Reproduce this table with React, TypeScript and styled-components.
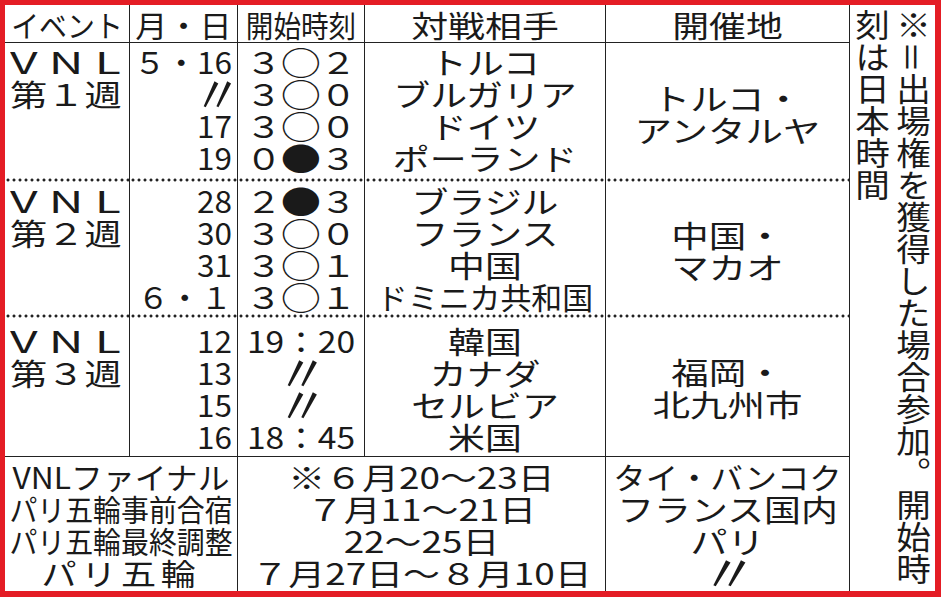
import React from 'react';
import styled, { createGlobalStyle, css } from 'styled-components';

type Align = 'left' | 'center' | 'right';
type Edge = 'solid' | 'dotted' | 'none';

interface TextLine {
  t: string;
  sx?: number;
  ls?: number;
}

interface CellData {
  lines: (string | TextLine)[];
  align: Align;
  sx: number;
  span?: number;
  middle?: boolean;
  ruled?: boolean;
}

interface Block {
  edge: Edge;
  padTop: number;
  cells: CellData[];
}

const INK = '#1a1a1a';
const RULE = '#222';

const VNL: TextLine = { t: 'VNL', sx: 1.6, ls: 7 };

const header: CellData[] = [
  { lines: ['イベント'], align: 'center', sx: 0.93 },
  { lines: ['月・日'], align: 'center', sx: 1.07 },
  { lines: ['開始時刻'], align: 'center', sx: 0.92 },
  { lines: ['対戦相手'], align: 'center', sx: 1.23 },
  { lines: ['開催地'], align: 'center', sx: 1.23, ruled: false },
];

const blocks: Block[] = [
  {
    edge: 'dotted',
    padTop: 2,
    cells: [
      { lines: [VNL, '第１週'], align: 'left', sx: 1.24 },
      { lines: ['５・16', '〃', '17', '19'], align: 'right', sx: 1.05 },
      { lines: ['３○２', '３○０', '３○０', '０●３'], align: 'center', sx: 1.2 },
      { lines: ['トルコ', 'ブルガリア', 'ドイツ', 'ポーランド'], align: 'center', sx: 1.23 },
      { lines: ['トルコ・', 'アンタルヤ'], align: 'center', sx: 1.25, middle: true, ruled: false },
    ],
  },
  {
    edge: 'dotted',
    padTop: 2,
    cells: [
      { lines: [VNL, '第２週'], align: 'left', sx: 1.24 },
      { lines: ['28', '30', '31', '６・１'], align: 'right', sx: 1.05 },
      { lines: ['２●３', '３○０', '３○１', '３○１'], align: 'center', sx: 1.2 },
      { lines: ['ブラジル', 'フランス', '中国', { t: 'ドミニカ共和国', sx: 1.03 }], align: 'center', sx: 1.23 },
      { lines: ['中国・', 'マカオ'], align: 'center', sx: 1.25, middle: true, ruled: false },
    ],
  },
  {
    edge: 'solid',
    padTop: 6,
    cells: [
      { lines: [VNL, '第３週'], align: 'left', sx: 1.24 },
      { lines: ['12', '13', '15', '16'], align: 'right', sx: 1.05 },
      { lines: ['19：20', '〃', '〃', '18：45'], align: 'center', sx: 1.12 },
      { lines: ['韓国', 'カナダ', 'セルビア', '米国'], align: 'center', sx: 1.23 },
      { lines: ['福岡・', '北九州市'], align: 'center', sx: 1.25, middle: true, ruled: false },
    ],
  },
  {
    edge: 'none',
    padTop: 3,
    cells: [
      {
        lines: [{ t: 'VNLファイナル', sx: 1.06 }, 'パリ五輪事前合宿', 'パリ五輪最終調整', { t: 'パリ五輪', sx: 1.17, ls: 4 }],
        align: 'center',
        sx: 0.93,
        span: 2,
      },
      {
        lines: ['※６月20〜23日', '７月11〜21日', '22〜25日', '７月27日〜８月10日'],
        align: 'center',
        sx: 1.23,
        span: 2,
      },
      {
        lines: [{ t: 'タイ・バンコク', sx: 1.08 }, 'フランス国内', 'パリ', '〃'],
        align: 'center',
        sx: 1.23,
        ruled: false,
      },
    ],
  },
];

const GlobalStyle = createGlobalStyle`
  html, body {
    margin: 0;
    padding: 0;
    background: #fff;
  }
  body {
    font-family: "Noto Sans CJK JP", "Noto Sans", sans-serif;
    color: ${INK};
  }
  * {
    box-sizing: border-box;
  }
`;

const Frame = styled.div`
  width: 941px;
  height: 597px;
  border-style: solid;
  border-color: #e41d25;
  border-width: 5px 6px 6px 5px;
  background: #fff;
  display: flex;
  overflow: hidden;
`;

const Table = styled.div`
  flex: none;
  display: grid;
  grid-template-columns: 125px 108px 127px 241px 243px;
  grid-template-rows: 38px 139px 136px 139px 1fr;
`;

const Cell = styled.div<{
  $span: number;
  $edge: Edge;
  $ruled: boolean;
  $align: Align;
  $middle: boolean;
  $padTop: number;
}>`
  grid-column: span ${({ $span }) => $span};
  display: flex;
  flex-direction: column;
  justify-content: ${({ $middle }) => ($middle ? 'center' : 'flex-start')};
  padding-top: ${({ $middle, $padTop }) => ($middle ? 0 : $padTop)}px;
  padding-left: ${({ $align }) => ($align === 'left' ? 5 : 0)}px;
  padding-right: ${({ $align }) => ($align === 'right' ? 5 : 0)}px;
  border-right: ${({ $ruled }) => ($ruled ? `1px solid ${RULE}` : 'none')};
  border-bottom: ${({ $edge }) => ($edge === 'solid' ? `1px solid ${RULE}` : 'none')};
  min-width: 0;
  ${({ $edge }) =>
    $edge === 'dotted' &&
    css`
      background-image: radial-gradient(circle, ${RULE} 1.2px, transparent 1.8px);
      background-size: 6px 4px;
      background-repeat: repeat-x;
      background-position: 0 100%;
    `}
`;

const Line = styled.div<{ $sx: number; $align: Align; $ls: number }>`
  display: flex;
  align-items: center;
  justify-content: ${({ $align }) =>
    $align === 'left' ? 'flex-start' : $align === 'right' ? 'flex-end' : 'center'};
  height: 32px;
  line-height: 32px;
  font-size: 30px;
  white-space: nowrap;
  letter-spacing: ${({ $ls }) => $ls}px;
  transform: scaleX(${({ $sx }) => $sx});
  transform-origin: ${({ $align }) => $align} center;
`;

/* score circles are drawn wider than the font's ○ / ● */
const Mark = styled.span`
  display: inline-block;
  transform: scale(1.12, 1.06);
  margin: 0 1px;
`;

/* ditto mark, taller and more slanted than the font's 〃 */
const Ditto = styled.span`
  display: inline-block;
  transform: translateY(3px) scale(1.4, 1.75) skewX(-10deg);
  transform-origin: 50% 70%;
`;

const Note = styled.div`
  flex: 1;
  border-left: 1px solid ${RULE};
  display: flex;
  justify-content: center;
`;

const NoteText = styled.div`
  writing-mode: vertical-rl;
  font-size: 32px;
  line-height: 38px;
  white-space: nowrap;
  padding-top: 4px;
  transform: scaleX(1.08);
`;

const renderText = (t: string) => {
  if (t === '〃') return <Ditto>〃</Ditto>;
  return t.split(/([○●])/).map((part, i) =>
    part === '○' || part === '●' ? <Mark key={i}>{part}</Mark> : part
  );
};

const TableCell: React.FC<{ data: CellData; edge: Edge; padTop: number }> = ({ data, edge, padTop }) => (
  <Cell
    $span={data.span ?? 1}
    $edge={edge}
    $ruled={data.ruled ?? true}
    $align={data.align}
    $middle={data.middle ?? false}
    $padTop={padTop}
  >
    {data.lines.map((l, i) => {
      const line = typeof l === 'string' ? { t: l } : l;
      return (
        <Line key={i} $sx={line.sx ?? data.sx} $align={data.align} $ls={line.ls ?? 0}>
          {renderText(line.t)}
        </Line>
      );
    })}
  </Cell>
);

const App: React.FC = () => (
  <>
    <GlobalStyle />
    <Frame>
      <Table>
        {header.map((c, i) => (
          <TableCell key={`h${i}`} data={{ ...c, middle: true }} edge="solid" padTop={0} />
        ))}
        {blocks.map((b, bi) =>
          b.cells.map((c, ci) => <TableCell key={`${bi}-${ci}`} data={c} edge={b.edge} padTop={b.padTop} />)
        )}
      </Table>
      <Note>
        <NoteText>
          ※＝出場権を獲得した場合参加。開始時
          <br />
          刻は日本時間
        </NoteText>
      </Note>
    </Frame>
  </>
);

export default App;
